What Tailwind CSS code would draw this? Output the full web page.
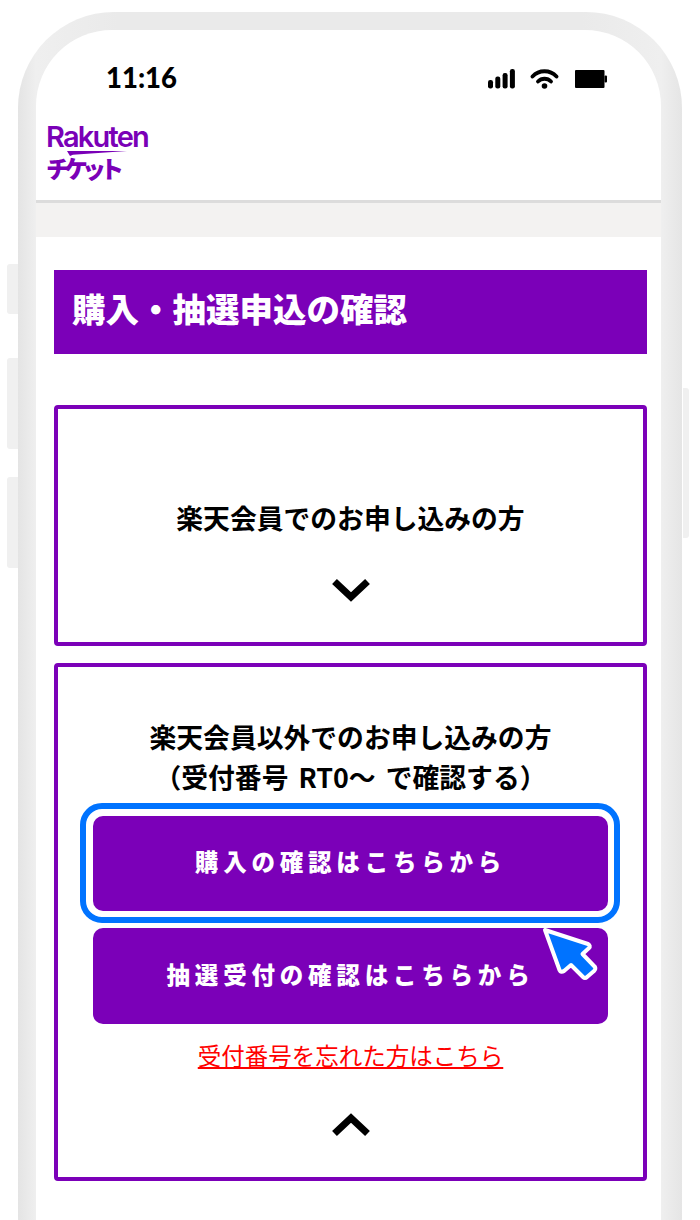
<!DOCTYPE html>
<html lang="ja">
<head>
<meta charset="utf-8">
<script src="https://cdn.jsdelivr.net/npm/@tailwindcss/browser@4"></script>
</head>
<body class="bg-white">
<div class="relative w-[700px] h-[1220px] overflow-hidden bg-white font-['Noto_Sans_CJK_JP','Noto_Sans',sans-serif]">
  <!-- side buttons -->
  <div class="absolute left-[7px] top-[264px] w-[11px] h-[50px] bg-[#f0f0f0] rounded-l-[3px]"></div>
  <div class="absolute left-[7px] top-[358px] w-[11px] h-[91px] bg-[#f0f0f0] rounded-l-[3px]"></div>
  <div class="absolute left-[7px] top-[477px] w-[11px] h-[91px] bg-[#f0f0f0] rounded-l-[3px]"></div>
  <div class="absolute left-[683px] top-[388px] w-[6px] h-[150px] bg-[#f0f0f0] rounded-r-[3px]"></div>

  <!-- phone frame -->
  <div class="absolute left-[18px] top-[12px] w-[664px] h-[1300px] rounded-[96px] pt-[18px] pl-[18px] pr-[21px] bg-[linear-gradient(to_right,#e4e4e4_0px,#efefef_18px,#eaeaea_100px,#eaeaea_calc(100%-100px),#efefef_calc(100%-21px),#e5e5e5_100%)]">
    <div class="h-[1300px] rounded-t-[76px] bg-white overflow-hidden">
    <!-- status bar -->
    <div class="h-[70px] relative">
      <span class="absolute left-[70px] top-[30px] text-[27.500px] leading-[36px] font-black text-black font-['Lato',sans-serif]">11:16</span>
      <svg class="absolute left-[452px] top-[39px]" width="27" height="20" viewBox="0 0 27 20" fill="#000">
        <rect x="0" y="11" width="5" height="8.500" rx="2.200"/><rect x="7.300" y="7.500" width="5" height="12" rx="2.200"/><rect x="14.600" y="4" width="5" height="15.500" rx="2.200"/><rect x="21.900" y="0" width="5" height="19.500" rx="2.200"/>
      </svg>
      <svg class="absolute left-[494px] top-[38px]" width="30" height="22" viewBox="0 0 30 22" fill="none" stroke="#000" stroke-width="3.800" stroke-linecap="round">
        <path d="M2.500 8.500C9 1.500 20 1.500 26.500 8.500"/><path d="M8 13.500C11.500 9.800 17.500 9.800 21 13.500"/><circle cx="14.500" cy="18" r="2.800" fill="#000" stroke="none"/>
      </svg>
      <svg class="absolute left-[539px] top-[40px]" width="33" height="18" viewBox="0 0 33 18" fill="#000">
        <rect x="0" y="0" width="29.500" height="18" rx="1"/><rect x="29.500" y="5.500" width="2.500" height="7" rx="1"/>
      </svg>
    </div>
    <!-- logo -->
    <div class="h-[100px] pl-[10px]">
      <span class="block text-[#7a00b7] font-['Inter',sans-serif] font-semibold text-[29px] leading-[28px] tracking-[-1.800px] pt-[23px]">Rakuten</span>
      <svg class="block ml-[21px]" width="60" height="5" viewBox="0 0 60 5"><path d="M0 0H60L6 3.800 3 5Z" fill="#7a00b7"/></svg>
      <span class="block text-[#7a00b7] font-black text-[24px] leading-[24px] tracking-[-6px]">チケット</span>
    </div>
    <!-- separator -->
    <div class="h-[37px] bg-[#f3f2f1] border-t-[3px] border-[#dcdcdc]"></div>
    <!-- content -->
    <div class="pl-[18px] pr-[14px] pt-[33px]">
      <h1 class="h-[84px] bg-[#7b00b8] text-white font-black text-[33.500px] leading-[76px] pl-[18px]">購入・抽選申込の確認</h1>
      <section class="mt-[51px] h-[241px] border-[4px] border-[#7b00b8] rounded-[4px] flex flex-col items-center">
        <p class="mt-[91px] text-[26.800px] leading-[36px] font-bold text-black">楽天会員でのお申し込みの方</p>
        <svg class="mt-[42px]" width="38" height="24" viewBox="0 0 38 24" fill="none" stroke="#000" stroke-width="7" stroke-linecap="butt" stroke-linejoin="miter"><path d="M2.500 3.500L19 19 35.500 3.500"/></svg>
      </section>
      <section class="mt-[17px] h-[518px] border-[4px] border-[#7b00b8] rounded-[4px] flex flex-col items-center relative">
        <p class="mt-[50px] text-[26.800px] leading-[40px] font-bold text-black text-center [word-spacing:4px]">楽天会員以外でのお申し込みの方<br>（受付番号 RT0～ で確認する）</p>
        <div class="mt-[6px] -ml-[1px] w-[540px] h-[120px] rounded-[22px] border-[6px] border-[#0073ff] pt-[7px] pb-[6px] pl-[7px] pr-[6px]">
          <a class="flex items-center justify-center h-full pb-[3px] rounded-[10px] bg-[#7b00b8] text-white font-black text-[23.500px] tracking-[4.800px]">購入の確認はこちらから</a>
        </div>
        <a class="mt-[5px] w-[515px] h-[96px] pb-[3px] flex items-center justify-center rounded-[10px] bg-[#7b00b8] text-white font-black text-[23.500px] tracking-[4.800px]">抽選受付の確認はこちらから</a>
        <a class="mt-[13px] text-[23.500px] leading-[36px] text-[#ff0000] underline">受付番号を忘れた方はこちら</a>
        <svg class="mt-[40px]" width="38" height="24" viewBox="0 0 38 24" fill="none" stroke="#000" stroke-width="7" stroke-linecap="butt" stroke-linejoin="miter"><path d="M2.500 20.500L19 5 35.500 20.500"/></svg>
        <!-- cursor -->
        <svg class="absolute left-[482px] top-[258px]" width="60" height="60" viewBox="0 0 60 60">
          <path d="M5 5L48 19Q51 21 49 23L42.500 29L55 42Q56 44 54 46L47 52Q45 54 43 52L31 40L24 46Q21 48 19.500 45Z" fill="#0073ff" stroke="#fff" stroke-width="4" stroke-linejoin="round"/>
        </svg>
      </section>
    </div>
    </div>
  </div>
</div>
</body>
</html>
